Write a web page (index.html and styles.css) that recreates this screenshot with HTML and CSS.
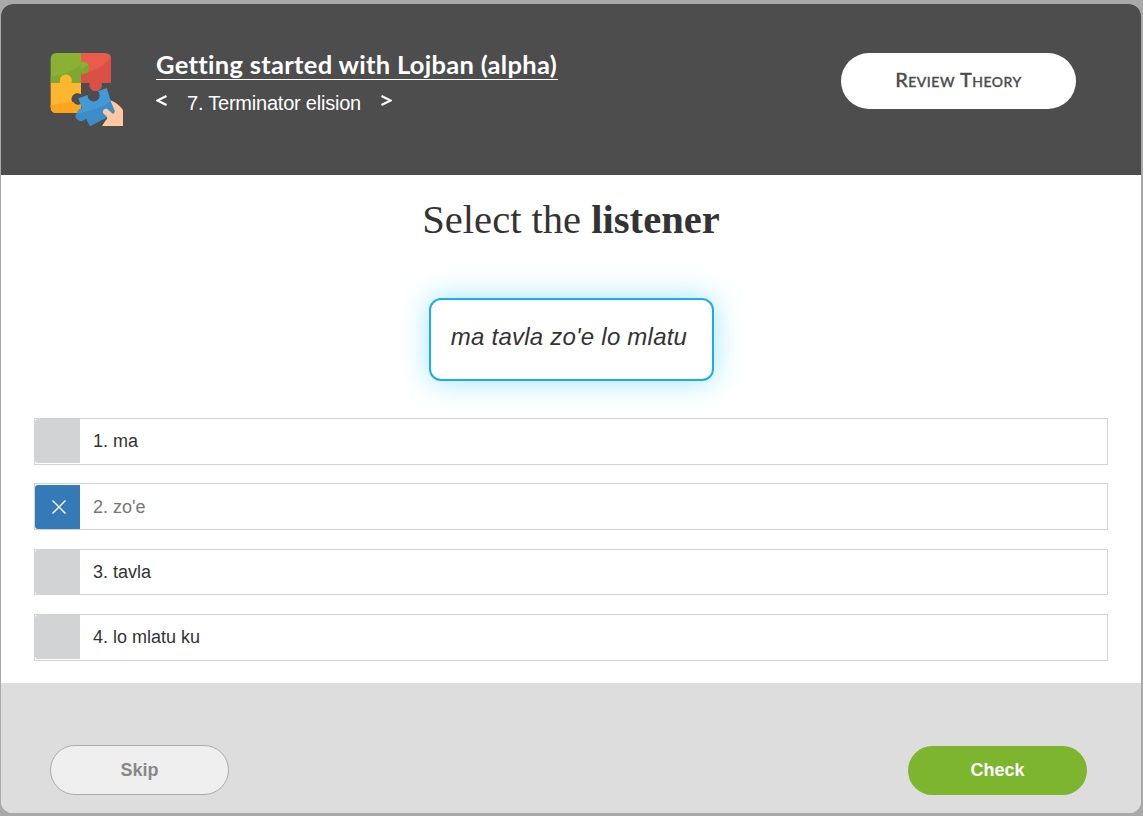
FILE: index.html
```html
<!DOCTYPE html>
<html lang="en">
<head>
<meta charset="utf-8">
<title>Getting started with Lojban</title>
<link rel="stylesheet" href="styles.css">
</head>
<body>
<main class="card">
  <header class="header">
    <svg class="logo" viewBox="30 24 222 222" aria-hidden="true">
      <path fill="#8ab134" d="M50 24H123V114H32V42Q32 24 50 24Z"/>
      <path fill="#7fa631" d="M32 96Q82 88 123 60V114H32Z"/>
      <path fill="#ea5b4c" d="M123 24H195Q213 24 213 42V114H123Z"/>
      <path fill="#d95145" d="M123 88Q178 76 213 38V114H185A19 19 0 1 1 149 114H123Z"/>
      <path fill="#7fa631" d="M122 53A18 18 0 1 1 122 85Z"/>
      <path fill="#8ab134" d="M122 53A18 18 0 0 1 145 59L122 74Z"/>
      <path fill="#ffb62f" d="M32 114H61A18 18 0 1 1 94 114H123V148A18 18 0 1 0 123 177V204H50Q32 204 32 186Z"/>
      <path fill="#ffa51d" d="M32 180Q70 176 99 170A18 18 0 0 0 123 177V204H50Q32 204 32 186Z"/>
      <path fill="#4399d6" d="M115 160L143 150A18 18 0 1 0 174 139L200 129L224 205L150 243L138 220A17 17 0 1 1 126 190Z"/>
      <path fill="#3d8bc8" d="M107 207Q172 196 213 169L224 205L150 243L138 220A17 17 0 0 1 107 207Z"/>
      <path fill="#ffc8a4" d="M211 166Q232 173 249 195V243H186L198 225Q208 218 192 207C184 199 192 188 202 192L219 207Q226 203 223 196Z"/>
    </svg>
    <div class="course">
      <h1 class="title"><a class="title-link">Getting started with Lojban (alpha)</a></h1>
      <nav class="lesson">
        <svg class="arrow" viewBox="0 0 11 11"><path d="M10.5 1L1.5 5.5L10.5 10"/></svg>
        <span class="lesson-name">7. Terminator elision</span>
        <svg class="arrow" viewBox="0 0 11 11"><path d="M.5 1L9.5 5.5L.5 10"/></svg>
      </nav>
    </div>
    <button class="theory">Review Theory</button>
  </header>
  <section class="exercise">
    <h2 class="question">Select the <b>listener</b></h2>
    <p class="phrase">ma tavla zo'e lo mlatu</p>
    <ul class="options">
      <li class="option"><span class="mark"></span><span>1. ma</span></li>
      <li class="option selected"><span class="mark"><svg class="cross" viewBox="0 0 14 14"><path d="M.5 .5L13.5 13.5M13.5 .5L.5 13.5"/></svg></span><span class="answer">2. zo'e</span></li>
      <li class="option short"><span class="mark"></span><span>3. tavla</span></li>
      <li class="option"><span class="mark"></span><span>4. lo mlatu ku</span></li>
    </ul>
  </section>
  <footer class="footer">
    <button class="action skip">Skip</button>
    <button class="action check">Check</button>
  </footer>
</main>
</body>
</html>
```
FILE: styles.css
```css
* { box-sizing: border-box; }
body {
  margin: 0;
  height: 816px;
  padding: 4px 2px 3px 1px;
  background: #a9a9a9;
  color: #333;
  font-family: "Liberation Sans", Arial, sans-serif;
}
button { border: 0; font-family: inherit; }
.card {
  height: 809px;
  display: flex;
  flex-direction: column;
  border-radius: 12px;
  overflow: hidden;
  background: #fff;
}
.header {
  height: 171px;
  padding: 49px 65px 0 49px;
  display: flex;
  align-items: flex-start;
  background: #4d4d4d;
  color: #fff;
}
.logo { width: 74px; height: 74px; }
.course { margin-left: 32px; }
.title {
  margin: 0;
  height: 27px;
  font: 700 25.5px/22px Lato, sans-serif;
  font-variant-ligatures: none;
  letter-spacing: .3px;
  white-space: nowrap;
}
.title-link { display: block; width: 402px; height: 27px; border-bottom: 1px solid #fff; }
.lesson { display: flex; align-items: center; height: 24px; margin-top: 11px; font-size: 20px; }
.lesson-name { width: 175px; margin: 0 19px 0 20px; line-height: 24px; letter-spacing: -.22px; white-space: nowrap; }
.arrow { width: 11px; height: 11px; margin-top: -5px; fill: none; stroke: #fff; stroke-width: 2.2; }
.theory {
  width: 235px;
  height: 56px;
  margin-left: auto;
  padding: 0 0 5px;
  border-radius: 28px;
  background: #fff;
  color: #4d4d4d;
  font: 500 20px Lato, sans-serif;
  font-variant: small-caps;
  letter-spacing: .5px;
  -webkit-text-stroke: .35px #4d4d4d;
}
.exercise {
  height: 508px;
  padding: 0 33px;
  display: flex;
  flex-direction: column;
  align-items: center;
}
.question { margin: 20px 0 0; font: 400 40.6px/50px "Liberation Serif", serif; }
.phrase {
  width: 285px;
  height: 83px;
  margin: 53px 0 0;
  padding: 22px 4px 0 0;
  border: 2px solid #1cabf2;
  border-radius: 12px;
  box-shadow: 0 0 30px #a0e6ff;
  font-size: 24px;
  line-height: 30px;
  letter-spacing: .23px;
  font-style: italic;
  text-align: center;
}
.options {
  width: 1074px;
  margin: 37px 0 0;
  padding: 0;
  list-style: none;
}
.option {
  height: 47px;
  display: flex;
  align-items: center;
  gap: 13px;
  margin-bottom: 18px;
  border: 1px solid #d1d3d4;
  font-size: 18px;
}
.mark {
  width: 45px;
  height: 44px;
  margin-bottom: 1px;
  display: grid;
  place-items: center;
  border-radius: 3px 0 0 3px;
  background: #d1d3d4;
}
.selected { color: #777; margin-bottom: 19px; }
.selected .mark { margin: 1px 0 0; background: #337ab7; }
.answer { margin-top: 1px; }
.short { height: 46px; margin-bottom: 19px; }
.short .mark { margin: 0; }
.cross { width: 14px; height: 14px; margin-left: 3px; fill: none; stroke: #fff; stroke-width: 1.4; }
.footer {
  flex: 1;
  padding: 62px 54px 0 49px;
  display: flex;
  justify-content: space-between;
  background: #ddd;
}
.action { width: 179px; height: 50px; border-radius: 25px; font-size: 18px; font-weight: 700; }
.skip { border: 1px solid #aaa; background: #efefef; color: #888; }
.check { height: 49px; margin-top: 1px; background: #7db52f; color: #fff; }
```
